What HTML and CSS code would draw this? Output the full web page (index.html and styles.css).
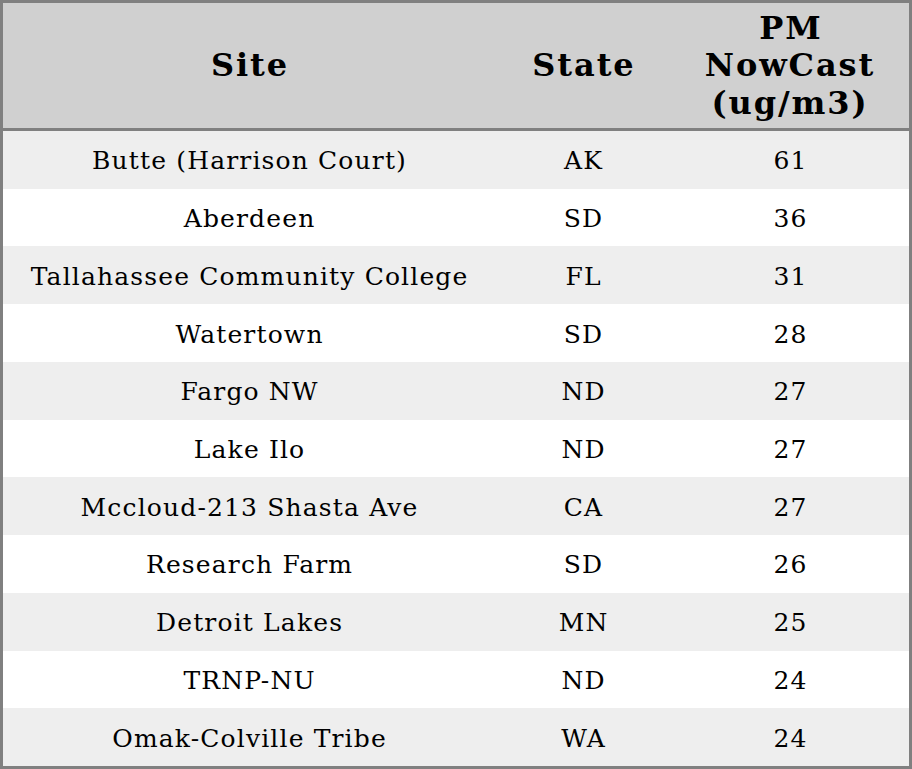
FILE: index.html
```html
<!DOCTYPE html>
<html>
<head>
<meta charset="utf-8">
<link rel="stylesheet" href="styles.css">
</head>
<body>
<div class="table">
  <div class="row head"><div class="cell">Site</div><div class="cell">State</div><div class="cell">PM<br>NowCast<br>(ug/m3)</div></div>
  <div class="row"><div class="cell">Butte (Harrison Court)</div><div class="cell">AK</div><div class="cell">61</div></div>
  <div class="row"><div class="cell">Aberdeen</div><div class="cell">SD</div><div class="cell">36</div></div>
  <div class="row"><div class="cell">Tallahassee Community College</div><div class="cell">FL</div><div class="cell">31</div></div>
  <div class="row"><div class="cell">Watertown</div><div class="cell">SD</div><div class="cell">28</div></div>
  <div class="row"><div class="cell">Fargo NW</div><div class="cell">ND</div><div class="cell">27</div></div>
  <div class="row"><div class="cell">Lake Ilo</div><div class="cell">ND</div><div class="cell">27</div></div>
  <div class="row"><div class="cell">Mccloud-213 Shasta Ave</div><div class="cell">CA</div><div class="cell">27</div></div>
  <div class="row"><div class="cell">Research Farm</div><div class="cell">SD</div><div class="cell">26</div></div>
  <div class="row"><div class="cell">Detroit Lakes</div><div class="cell">MN</div><div class="cell">25</div></div>
  <div class="row"><div class="cell">TRNP-NU</div><div class="cell">ND</div><div class="cell">24</div></div>
  <div class="row"><div class="cell">Omak-Colville Tribe</div><div class="cell">WA</div><div class="cell">24</div></div>
</div>
</body>
</html>
```
FILE: styles.css
```css
html, body {
  margin: 0;
  padding: 0;
  background: #ffffff;
}
.table {
  display: grid;
  grid-template-columns: 492px 176px 1fr;
  grid-template-rows: 128px repeat(11, 1fr);
  width: 912px;
  height: 769px;
  box-sizing: border-box;
  border: 3px solid #808080;
  font-family: "DejaVu Serif", serif;
  color: #000;
}
.row {
  display: contents;
}
.cell {
  display: flex;
  align-items: center;
  justify-content: center;
  text-align: center;
  font-size: 25px;
  letter-spacing: 1.15px;
  text-indent: 1.15px;
  padding-top: 2px;
  white-space: nowrap;
}
.row:nth-child(even) .cell {
  background: #eeeeee;
}
.row:nth-child(odd) .cell {
  background: #ffffff;
}
.head .cell {
  background: #d0d0d0 !important;
  font-weight: bold;
  font-size: 32px;
  letter-spacing: 1.9px;
  text-indent: 1.9px;
  line-height: 37.5px;
  padding-top: 1px;
  border-bottom: 3px solid #808080;
}
```
